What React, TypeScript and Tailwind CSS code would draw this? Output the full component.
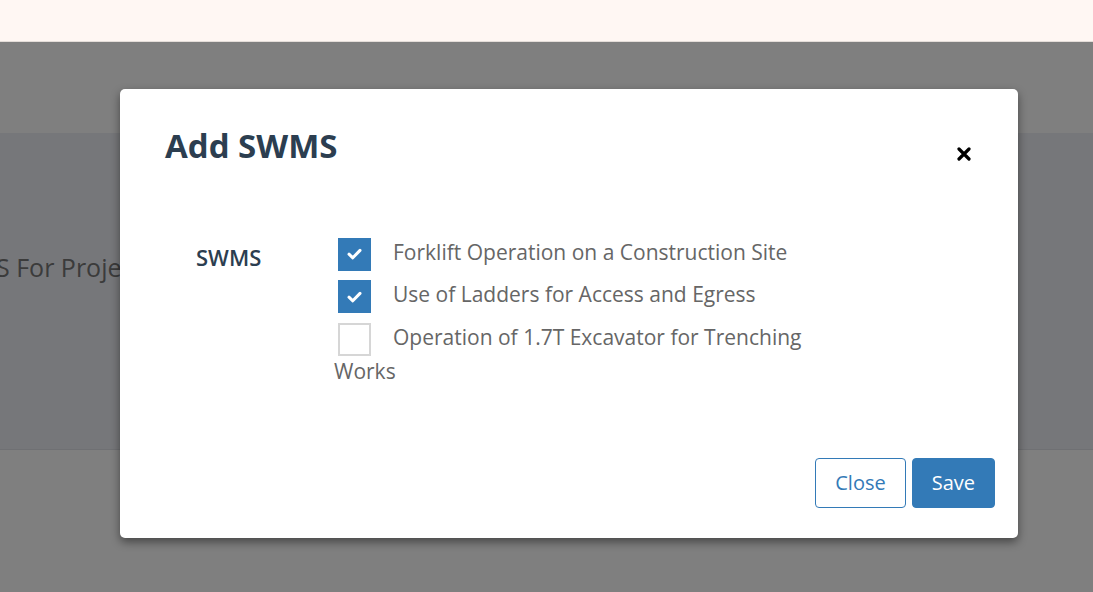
import React from "react";

const items = [
  { label: "Forklift Operation on a Construction Site", checked: true },
  { label: "Use of Ladders for Access and Egress", checked: true },
  { label: "Operation of 1.7T Excavator for Trenching Works", checked: false },
];

const Check = ({ checked }: { checked: boolean }) => (
  <span
    className={
      checked
        ? "inline-flex items-center justify-center w-[33px] h-[33px] align-middle ml-[4px] mr-[22px] bg-[#337ab7]"
        : "inline-flex items-center justify-center w-[33px] h-[33px] align-middle ml-[4px] mr-[22px] bg-white border-2 border-[#d6d6d6]"
    }
  >
    {checked && (
      <svg width="15" height="12" viewBox="0 0 15 12" fill="none">
        <path d="M2 6.2 L5.8 9.8 L13 2.4" stroke="white" strokeWidth="3" strokeLinecap="round" strokeLinejoin="round" />
      </svg>
    )}
  </span>
);

export default function App() {
  return (
    <div className="relative w-[1093px] h-[592px] overflow-hidden bg-white font-['Open_Sans',sans-serif]">
      {/* top bar (not covered by backdrop) */}
      <div className="h-[42px] bg-[#fff7f3] border-b border-[#e4ddd9]" />

      {/* page underneath */}
      <div className="pt-[91px]">
        <div className="h-[317px] bg-[#eceef4] border-b border-[#dfe1e6]">
          <div className="pt-[118px] -ml-[4px] text-[25px] leading-[32px] text-[#777]">S For Project Details</div>
        </div>
      </div>

      {/* backdrop + modal */}
      <div className="absolute left-0 right-0 top-[42px] bottom-0 bg-black/50">
        <div className="ml-[120px] mt-[47px] w-[898px] bg-white rounded-[5px] shadow-[0_4px_10px_rgba(0,0,0,0.45)] pl-[45px] pr-[23px] pt-[36px] pb-[30px]">
          <div className="flex items-start justify-between pr-[24px]">
            <h3 className="text-[33px] leading-[41px] font-bold text-[#2c3e50]">Add SWMS</h3>
            <button className="mt-[22px] w-[14px] h-[14px] flex items-center justify-center">
              <svg width="14" height="14" viewBox="0 0 14 14">
                <path d="M2 2 L12 12 M12 2 L2 12" stroke="black" strokeWidth="3.2" strokeLinecap="round" />
              </svg>
            </button>
          </div>

          <div className="flex mt-[71px] pl-[31px]">
            <div className="w-[138px] pt-[5px] text-[22px] leading-[30px] font-semibold text-[#2c3e50]">SWMS</div>
            <div className="w-[496px] text-[21px] leading-[30px] text-[#666]">
              {items.map((it, i) => (
                <div key={i} className="mb-[8.5px]">
                  <Check checked={it.checked} />
                  {it.label}
                </div>
              ))}
            </div>
          </div>

          <div className="flex justify-end gap-[6px] mt-[63.5px]">
            <button className="h-[50px] px-[19px] rounded-[4px] border border-[#337ab7] text-[20px] text-[#337ab7] bg-white">
              Close
            </button>
            <button className="h-[50px] px-[19px] rounded-[4px] border border-[#337ab7] bg-[#337ab7] text-[20px] text-white">
              Save
            </button>
          </div>
        </div>
      </div>
    </div>
  );
}
